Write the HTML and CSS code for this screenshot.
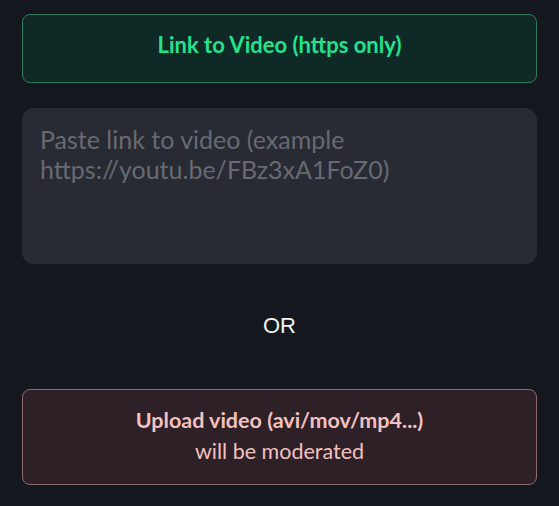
FILE: index.html
```html
<!DOCTYPE html>
<html lang="en">
<head>
<meta charset="utf-8">
<title>Video</title>
<link rel="stylesheet" href="styles.css">
</head>
<body>
<main class="page">
  <div class="link-box">Link to Video (https only)</div>
  <textarea class="link-input" placeholder="Paste link to video (example https://youtu.be/FBz3xA1FoZ0)"></textarea>
  <div class="or">OR</div>
  <div class="upload-box">
    <div class="upload-title">Upload video (avi/mov/mp4...)</div>
    <div class="upload-note">will be moderated</div>
  </div>
</main>
</body>
</html>
```

FILE: styles.css
```css
html, body {
  margin: 0;
  padding: 0;
  background: #14171e;
}
.page {
  display: flex;
  flex-direction: column;
  padding: 14px 22px 0;
  font-family: Lato, "Noto Sans", sans-serif;
}
.link-box {
  height: 69px;
  box-sizing: border-box;
  border: 1px solid #2b7d58;
  border-radius: 8px;
  background: #0f2a26;
  color: #22e28e;
  font-weight: 700;
  font-size: 22px;
  display: flex;
  align-items: center;
  justify-content: center;
  padding-bottom: 8px;
}
.link-input {
  margin-top: 25px;
  height: 156px;
  box-sizing: border-box;
  border: none;
  outline: none;
  resize: none;
  border-radius: 12px;
  background: #282b33;
  padding: 16px 18px;
  font-family: Lato, "Noto Sans", sans-serif;
  font-size: 25px;
  line-height: 30px;
  color: #e0e0e0;
}
.link-input::placeholder {
  color: #676a72;
}
.or {
  margin-top: 49px;
  text-align: center;
  font-family: "Liberation Sans", Arial, sans-serif;
  font-size: 22px;
  line-height: 26px;
  color: #f2f2f2;
}
.upload-box {
  margin-top: 50px;
  height: 96px;
  box-sizing: border-box;
  border: 1px solid #8a6a70;
  border-radius: 8px;
  background: #2d2127;
  color: #f4c0bf;
  display: flex;
  flex-direction: column;
  align-items: center;
  justify-content: center;
  padding-bottom: 2px;
}
.upload-title {
  font-weight: 700;
  font-size: 21.5px;
  line-height: 31px;
}
.upload-note {
  font-size: 21.5px;
  line-height: 31px;
}
```
